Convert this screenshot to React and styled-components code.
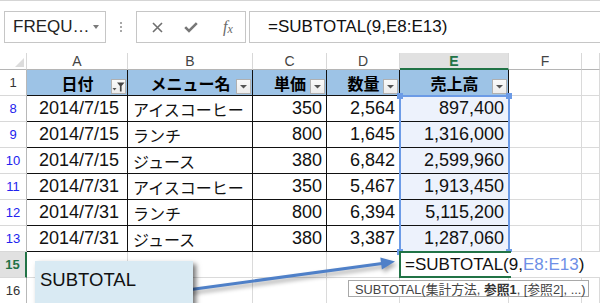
import React from 'react';
import styled, { createGlobalStyle, css } from 'styled-components';

const Global = createGlobalStyle`
  html, body { margin: 0; padding: 0; background: #fff; }
  body { font-family: "Liberation Sans", "Noto Sans CJK JP", sans-serif; }
`;

const GREEN = '#217346';
const GRID = '#dadada';
const SEL = '#6c9be6';

const Screen = styled.div`
  position: relative;
  width: 600px;
  height: 303px;
  overflow: hidden;
  background: #fff;
  font-family: "Liberation Sans", "Noto Sans CJK JP", sans-serif;
`;

/* ---------- formula bar ---------- */
const FormulaBar = styled.div`
  box-sizing: border-box;
  height: 53px;
  display: flex;
  align-items: flex-start;
  padding: 10px 0 0 4px;
  border-top: 1px solid #d5d5d5;
  & > * { flex-shrink: 0; }
`;

const Box = styled.div`
  box-sizing: border-box;
  height: 32px;
  border: 1px solid #c6c6c6;
  background: #fff;
  display: flex;
  align-items: center;
`;

const NameBox = styled(Box)`
  width: 102px;
  padding: 0 6px 0 8px;
  justify-content: space-between;
  font-size: 17px;
  color: #222;
`;

const Caret = styled.span`
  width: 0;
  height: 0;
  border-left: 3.5px solid transparent;
  border-right: 3.5px solid transparent;
  border-top: 4px solid #7a7a7a;
`;

const Grip = styled.div`
  width: 2px;
  height: 32px;
  margin: 0 14px 0 14px;
  display: flex;
  flex-direction: column;
  justify-content: center;
  gap: 2px;
  & > i { display: block; width: 2px; height: 2px; background: #a8a8a8; }
`;

const Buttons = styled(Box)`
  width: 110px;
  padding: 0 0 0 14px;
`;

const IconSlot = styled.span`
  display: flex;
  align-items: center;
  justify-content: center;
  width: ${p => p.$w}px;
  color: #707070;
`;

const Fx = styled.span`
  font-family: "Liberation Serif", "DejaVu Serif", serif;
  font-style: italic;
  font-size: 16px;
  color: #6a6a6a;
  & > sub { font-size: 12px; vertical-align: -1px; margin-left: 0px; }
`;

const Input = styled(Box)`
  width: 380px;
  margin-left: 3px;
  padding-left: 18px;
  font-size: 17px;
  color: #111;
`;

/* ---------- sheet ---------- */
const Sheet = styled.div`
  display: grid;
  grid-template-columns: 27px 101px 125px 74px 73px 109px 73px 18px;
  grid-template-rows: 17px repeat(9, 26px);
`;

const ColHead = styled.div`
  box-sizing: border-box;
  position: relative;
  display: flex;
  align-items: center;
  justify-content: center;
  font-size: 14px;
  color: #444;
  background: #fff;
  border-right: 1px solid #d8d8d8;
  border-bottom: 1px solid #b5b5b5;
  ${p => p.$active && css`
    background: #e1e1e1;
    color: ${GREEN};
    font-weight: bold;
    border-bottom: 2px solid ${GREEN};
  `}
`;

const RowHead = styled.div`
  box-sizing: border-box;
  display: flex;
  align-items: center;
  justify-content: center;
  font-size: 13px;
  color: ${p => p.$color || '#333'};
  background: #fff;
  border-right: 1px solid #b8b8b8;
  border-bottom: 1px solid #d8d8d8;
  ${p => p.$active && css`
    background: #e1e1e1;
    color: ${GREEN};
    font-weight: bold;
    border-right: 2px solid ${GREEN};
  `}
`;

const Cell = styled.div`
  box-sizing: border-box;
  position: relative;
  display: flex;
  align-items: center;
  min-width: 0;
  white-space: nowrap;
  overflow: hidden;
  padding: 0 4px 0 5px;
  font-size: 18px;
  color: #111;
  background: ${p => (p.$sel ? '#edf2fc' : '#fff')};
  border-right: 1px solid ${p => (p.$table ? '#111' : GRID)};
  border-bottom: 1px solid ${p => (p.$table ? '#111' : GRID)};
  justify-content: ${p => (p.$right ? 'flex-end' : 'flex-start')};
  ${p => p.$date && css`padding-right: 8px;`}
  ${p => p.$jp && css`font-size: 16px;`}
  ${p => p.$head && css`
    background: #9dc3e6;
    justify-content: center;
    font-size: 16px;
    font-weight: bold;
    color: #000;
  `}
`;

const FilterBtn = styled.span`
  position: absolute;
  right: 1px;
  bottom: 1px;
  width: 15px;
  height: 15px;
  box-sizing: border-box;
  border: 1px solid #b0b0b0;
  background: linear-gradient(#fafafa, #ececec);
  display: flex;
  align-items: center;
  justify-content: center;
`;

const ActiveCell = styled.div`
  grid-column: span 3;
  position: relative;
  box-sizing: border-box;
  display: flex;
  align-items: center;
  padding-left: 5px;
  white-space: nowrap;
  font-size: 17px;
  color: #111;
  background: #fff;
  border-bottom: 1px solid ${GRID};
  z-index: 3;
  &::before {
    content: '';
    position: absolute;
    left: -1px;
    top: -1px;
    bottom: -1px;
    width: 110px;
    border: 2px solid ${GREEN};
    border-right: none;
  }
`;

const Ref = styled.span`
  color: #6e8fe6;
`;

/* ---------- overlays ---------- */
const Selection = styled.div`
  position: absolute;
  left: 399px;
  top: 95px;
  width: 111px;
  height: 158px;
  box-sizing: border-box;
  border: 2px solid ${SEL};
  z-index: 2;
  pointer-events: none;
`;

const Handle = styled.span`
  position: absolute;
  width: 6px;
  height: 6px;
  background: ${SEL};
  ${p => (p.$top ? 'top: -4px;' : 'bottom: -4px;')}
  ${p => (p.$left ? 'left: -4px;' : 'right: -4px;')}
`;

const Tip = styled.div`
  position: absolute;
  left: 348px;
  top: 280px;
  width: 241px;
  height: 17px;
  box-sizing: border-box;
  padding: 0 0 0 6px;
  display: flex;
  align-items: center;
  white-space: pre;
  border: 1px solid #a9a9a9;
  background: #fff;
  font-size: 12.8px;
  color: #444;
  z-index: 5;
  & > b { font-weight: bold; color: #333; }
`;

const Callout = styled.div`
  position: absolute;
  left: 35px;
  top: 261px;
  width: 158px;
  height: 60px;
  box-sizing: border-box;
  padding: 8px 0 0 5px;
  background: #d9eaf3;
  box-shadow: 3px 3px 5px rgba(0, 0, 0, 0.55);
  font-size: 18.5px;
  color: #111;
  z-index: 6;
`;

const ArrowLayer = styled.svg`
  position: absolute;
  left: 0;
  top: 0;
  width: 600px;
  height: 303px;
  z-index: 4;
  pointer-events: none;
  filter: drop-shadow(2px 3px 2px rgba(0, 0, 0, 0.35));
`;

const data = [
  [8, '2014/7/15', 'アイスコーヒー', '350', '2,564', '897,400'],
  [9, '2014/7/15', 'ランチ', '800', '1,645', '1,316,000'],
  [10, '2014/7/15', 'ジュース', '380', '6,842', '2,599,960'],
  [11, '2014/7/31', 'アイスコーヒー', '350', '5,467', '1,913,450'],
  [12, '2014/7/31', 'ランチ', '800', '6,394', '5,115,200'],
  [13, '2014/7/31', 'ジュース', '380', '3,387', '1,287,060'],
];

const DropIcon = () => (
  <svg width="9" height="5" viewBox="0 0 9 5">
    <polygon points="1,1 8,1 4.5,4.5" fill="#555" />
  </svg>
);

const FunnelIcon = () => (
  <svg width="13" height="11" viewBox="0 0 13 11">
    <polygon points="0.5,7 4.5,7 2.5,9.5" fill="#555" />
    <polygon points="5,1.5 12.5,1.5 9.6,5 9.6,10.5 7.9,10.5 7.9,5" fill="#444" />
  </svg>
);

const headers = ['日付', 'メニュー名', '単価', '数量', '売上高'];

export default function App() {
  return (
    <Screen>
      <Global />
      <FormulaBar>
        <NameBox>
          <span>FREQU…</span>
          <Caret />
        </NameBox>
        <Grip><i /><i /><i /></Grip>
        <Buttons>
          <IconSlot $w={12}>
            <svg width="11" height="11" viewBox="0 0 11 11">
              <path d="M1 1 L10 10 M10 1 L1 10" stroke="#6f6f6f" strokeWidth="1.6" fill="none" />
            </svg>
          </IconSlot>
          <IconSlot $w={56}>
            <svg width="14" height="11" viewBox="0 0 14 11">
              <path d="M1.2 5.2 L5 9 L12.8 1.2" stroke="#777" strokeWidth="2.6" fill="none" />
            </svg>
          </IconSlot>
          <IconSlot $w={18}>
            <Fx>f<sub>x</sub></Fx>
          </IconSlot>
        </Buttons>
        <Input>=SUBTOTAL(9,E8:E13)</Input>
      </FormulaBar>

      <Sheet>
        <ColHead>
          <svg width="27" height="16" viewBox="0 0 27 16" style={{ position: 'absolute', left: 0, top: 0 }}>
            <polygon points="24,5 24,14 15,14" fill="#dcdcdc" />
          </svg>
        </ColHead>
        {['A', 'B', 'C', 'D', 'E', 'F', ''].map(l => (
          <ColHead key={l || 'g'} $active={l === 'E'}>{l}</ColHead>
        ))}

        <RowHead>1</RowHead>
        {headers.map((h, i) => (
          <Cell key={h} $table $head>
            {h}
            <FilterBtn>{i === 0 ? <FunnelIcon /> : <DropIcon />}</FilterBtn>
          </Cell>
        ))}
        <Cell />
        <Cell />

        {data.map(([n, d, m, p, q, s]) => (
          <React.Fragment key={n}>
            <RowHead $color="#2222ee">{n}</RowHead>
            <Cell $table $right $date>{d}</Cell>
            <Cell $table $jp>{m}</Cell>
            <Cell $table $right>{p}</Cell>
            <Cell $table $right>{q}</Cell>
            <Cell $table $right $sel>{s}</Cell>
            <Cell />
            <Cell />
          </React.Fragment>
        ))}

        <RowHead $active>15</RowHead>
        <Cell />
        <Cell />
        <Cell />
        <Cell />
        <ActiveCell>
          =SUBTOTAL(9,<Ref>E8:E13</Ref>)
        </ActiveCell>

        <RowHead>16</RowHead>
        <Cell />
        <Cell />
        <Cell />
        <Cell />
        <Cell />
        <Cell />
        <Cell />
      </Sheet>

      <Selection>
        <Handle $top $left />
        <Handle $top />
        <Handle $left />
        <Handle />
      </Selection>

      <ArrowLayer viewBox="0 0 600 303">
        <line x1="180" y1="291" x2="382" y2="263.4" stroke="#4f80c8" strokeWidth="3" />
        <polygon points="395,261.5 380.3,257.4 381.9,269.4" fill="#4f80c8" />
      </ArrowLayer>

      <Callout>SUBTOTAL</Callout>

      <Tip>
        {'SUBTOTAL(集計方法, '}<b>参照1</b>{', [参照2], ...)'}
      </Tip>
    </Screen>
  );
}
